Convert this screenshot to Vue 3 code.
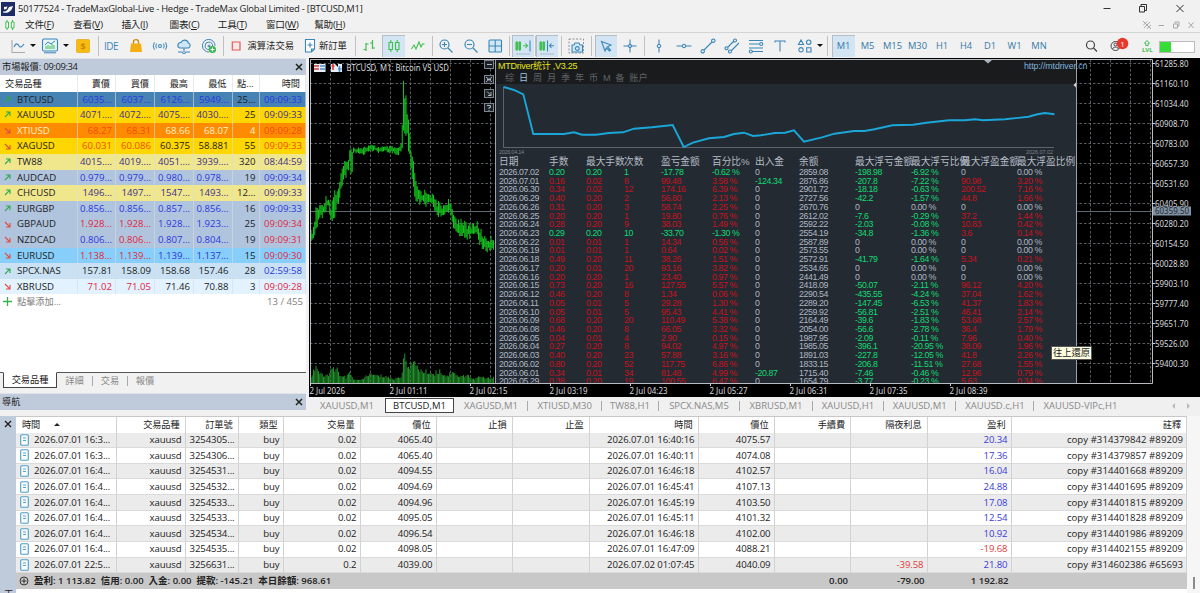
<template>
  <div class="terminal">
    <div class="titlebar">
      <svg class="logo" width="14" height="14" viewBox="0 0 14 14">
        <rect width="14" height="14" fill="#1d2a68" />
        <path d="M2 9.5C6 10 7 7 8 5L12 4C11 8 8 12 2 10.5ZM3 5L6.5 4.5L5.5 7L3 7.5Z" fill="#fff" />
      </svg>
      <span class="title-text">50177524 - TradeMaxGlobal-Live - Hedge - TradeMax Global Limited - [BTCUSD,M1]</span>
      <svg class="win-buttons" width="96" height="17" viewBox="1100 0 96 17">
        <path d="M1103.500 8.500H1110.500" />
        <path d="M1139.500 6.500H1144.500V12H1139.500ZM1141 6V4.500H1146.500V10.500H1145" />
        <path d="M1176.500 5L1183.500 12M1183.500 5L1176.500 12" />
      </svg>
    </div>

    <div class="menubar">
      <svg class="menu-logo" width="10" height="12" viewBox="0 0 10 12">
        <path d="M2 1V11M7.500 1V11" stroke="#3fbf4f" />
        <path d="M.8 3H3.500V9H.8ZM6.300 3H9V9H6.300Z" fill="#fff" stroke="#3fbf4f" />
      </svg>
      <span v-for="m in menus" :key="m.key" class="menu-item">{{ m.label }}(<u>{{ m.key }}</u>)</span>
      <svg class="child-buttons" width="56" height="16" viewBox="1140 17 56 16">
        <path d="M1143 21L1151 29M1144 28L1150 22M1143.500 25L1147 21.500M1147 28.500L1151 25" />
        <path d="M1158.500 25.500H1164" />
        <path d="M1173.500 24H1177.500V28H1173.500ZM1175 23.500V22H1179V26H1178" />
        <path d="M1188.500 22.500L1193.500 28M1193.500 22.500L1188.500 28" />
      </svg>
    </div>

    <div class="toolbar">
      <div
        v-for="(t, i) in tools"
        :key="i"
        class="tool"
        :class="[t.type, { active: t.active }]"
        :style="{ width: t.w + 'px' }"
      >
        <svg v-if="t.icon" width="20" height="20" viewBox="-10 -10 20 20">
          <path
            v-for="(p, k) in icons[t.icon]"
            :key="k"
            :d="p.d"
            :stroke="p.c || 'none'"
            :fill="p.f || 'none'"
            :stroke-width="p.w || 1.100"
            :stroke-dasharray="p.dash"
          />
          <text v-if="t.icon === 'dollar'" x="0" y="3.500" class="dollar-sign">$</text>
        </svg>
        <template v-else>{{ t.text }}</template>
      </div>
      <div class="tool-right">
        <svg width="120" height="24" viewBox="1080 34 120 24">
          <circle cx="1090.500" cy="45" r="4" fill="none" stroke="#444" stroke-width="1.200" />
          <path d="M1093.500 48L1097 51.500" stroke="#444" stroke-width="1.300" />
          <circle cx="1115.500" cy="46" r="4.500" fill="none" stroke="#444" />
          <circle cx="1115.500" cy="44.500" r="1.500" fill="none" stroke="#444" />
          <path d="M1112.500 49C1113.500 46.500 1117.500 46.500 1118.500 49" fill="none" stroke="#444" />
          <circle cx="1122.500" cy="43.500" r="5.800" fill="#e8382a" />
          <text x="1122.500" y="46.600" class="badge-text">1</text>
          <path d="M1147 40.500L1149.500 43.200H1148.200V45.500H1145.800V43.200H1144.500Z" fill="none" stroke="#3fbf4f" />
          <text x="1147.300" y="52.300" class="lvl-text">LVL</text>
          <rect x="1159.500" y="41.500" width="35" height="11" fill="#fff" stroke="#bbb" />
          <rect x="1160" y="42" width="11" height="10" fill="#37dc37" />
        </svg>
      </div>
    </div>

    <div class="workspace">
      <div class="side">
        <div class="panel-head">
          <span>市場報價: <span class="clock">09:09:34</span></span>
          <svg width="8" height="8" viewBox="0 0 8 8"><path d="M1 1L7 7M7 1L1 7" stroke="#222" stroke-width="1.500" /></svg>
        </div>
        <div class="quotes">
          <div class="quote-row quote-header">
            <span v-for="h in quoteHeaders" :key="h">{{ h }}</span>
          </div>
          <div v-for="q in quotes" :key="q.name" class="quote-row" :class="q.bg">
            <span class="symbol">
              <svg width="7" height="7" viewBox="0 0 7 7">
                <path v-if="q.up" d="M1 6L5.800 1.200M2 1H6V5" stroke="#2fa84f" fill="none" stroke-width="1.100" />
                <path v-else d="M1 1L5.800 5.800M2 6H6V2" stroke="#e04a3a" fill="none" stroke-width="1.100" />
              </svg>
              {{ q.name }}
            </span>
            <span v-for="(v, i) in q.vals" :key="i" :class="tone[q.tones[i]]">{{ v }}</span>
          </div>
          <div class="add-row">
            <svg width="9" height="9" viewBox="0 0 9 9"><path d="M4.500 0V9M0 4.500H9" stroke="#3fae4f" stroke-width="1.300" /></svg>
            <span class="add-label">點擊添加...</span>
            <span>13 / 455</span>
          </div>
        </div>
        <div class="side-tabs">
          <span class="side-tab current">交易品種</span>
          <span class="side-tab first">詳細</span>
          <span class="side-tab">交易</span>
          <span class="side-tab">報價</span>
        </div>
        <div class="panel-head nav-head">
          <span>導航</span>
          <svg width="8" height="8" viewBox="0 0 8 8"><path d="M1 1L7 7M7 1L1 7" stroke="#222" stroke-width="1.500" /></svg>
        </div>
      </div>

      <div class="chart-area">
        <div class="chart">
          <svg class="canvas" width="891" height="339" viewBox="309 58 891 339">
            <rect x="309" y="58" width="891" height="339" fill="#000" />
            <path :d="gridPath" stroke="#70767c" stroke-width=".8" stroke-dasharray="2.500 2" />
            <path d="M310 211.500H1152" stroke="#5e6873" />
            <path :d="volumePath" stroke="#22902a" stroke-width="1" />
            <path :d="candlePath" stroke="#14c01c" stroke-width="1.050" />
            <path d="M310.500 59V383.500H1152.500V59.500H310" stroke="#b8bcc0" fill="none" />
            <g class="axis">
              <template v-for="(p, i) in prices" :key="p">
                <path :d="`M1152 ${63.5 + i * 20}h3`" stroke="#ccc" />
                <text x="1155" :y="66.800 + i * 20" textLength="33.500" lengthAdjust="spacingAndGlyphs">{{ p }}</text>
              </template>
              <rect x="1153" y="206.500" width="38" height="9" fill="#8191a1" />
              <text x="1155" y="214.300" textLength="34" lengthAdjust="spacingAndGlyphs" class="last-price">60359.50</text>
              <template v-for="(t, i) in times" :key="t">
                <path :d="`M${310.5 + i * 80} 383v3`" stroke="#ccc" />
                <text :x="309.500 + i * 80" y="394" :textLength="i ? 38 : 35.500" lengthAdjust="spacingAndGlyphs">{{ t }}</text>
              </template>
              <text x="346.500" y="71" textLength="102.500" lengthAdjust="spacingAndGlyphs" class="chart-name">BTCUSD, M1:  Bitcoin VS USD</text>
            </g>
            <rect x="314" y="64" width="11.500" height="8" fill="#e9eef5" />
            <path d="M314 66H319M314 69H319" stroke="#d33c3c" stroke-width="1.500" />
            <path d="M320 66H325.500M320 69H325.500" stroke="#4a8fc4" stroke-width="1.500" />
            <rect x="331" y="64" width="11" height="8" fill="#e9eef5" />
            <path d="M333 64V70M331.500 66H334.500" stroke="#d33c3c" stroke-width="1.600" />
            <path d="M339.500 66V72M338 69H341.500" stroke="#4a8fc4" stroke-width="1.600" />
            <path d="M335 64L338 67V64" fill="#000" />
            <g v-for="(b, i) in panelButtons" :key="i" fill="none" stroke="#7b8590">
              <rect x="484.500" :y="b.y" width="9" height="8" fill="#1c2127" />
              <path :d="b.d" stroke="#aab2ba" />
            </g>
          </svg>

          <div class="stats">
            <div class="stats-top">
              <div class="stats-title">
                <span>MTDriver统计 ,V3.25</span>
                <span class="stats-url">http://mtdriver.cn</span>
              </div>
              <div class="stats-tabs">
                <span v-for="s in periods" :key="s" :class="{ on: s === '日' }">{{ s }}</span>
              </div>
            </div>
            <svg class="equity" width="580" height="72" viewBox="496 84 580 72">
              <path d="M503.500 87V147.500H1054" fill="none" stroke="#5d646b" />
              <polyline :points="equity" fill="none" stroke="#1ba6da" stroke-width="1.900" />
              <text x="499" y="154" textLength="25">2026.04.14</text>
              <text x="1026" y="154" textLength="27">2026.07.02</text>
            </svg>
            <div class="stats-table">
              <div class="stats-row stats-header">
                <span v-for="h in statsHeaders" :key="h">{{ h }}</span>
              </div>
              <div v-for="r in stats" :key="r[0]" class="stats-row">
                <span v-for="(c, i) in r" :key="i" :class="statTone(r, i)">{{ c }}</span>
              </div>
            </div>
          </div>
          <svg class="marks" width="100" height="30" viewBox="980 59 100 30">
            <path d="M984 60H992L988 63.500Z" fill="#a7b6c4" />
            <path d="M1076 82.500V87.500L1073.500 85Z" fill="#cfd6dc" />
          </svg>
          <div class="tooltip">往上還原</div>
        </div>

        <div class="chart-tabs">
          <span
            v-for="(t, i) in chartTabs"
            :key="i"
            class="chart-tab"
            :class="{ current: i === 1, divided: i > 1 && i < chartTabs.length - 1 }"
            :style="{ width: t.w + 'px' }"
          >{{ t.name }}</span>
          <span class="tab-arrows">
            <svg width="30" height="8" viewBox="0 0 30 8"><path d="M5 1L2 4L5 7ZM17 1L20 4L17 7Z" fill="#b8b8b8" /></svg>
          </span>
        </div>
      </div>
    </div>

    <div class="toolbox">
      <div class="toolbox-strip">
        <svg width="8" height="8" viewBox="0 0 8 8"><path d="M1 1L7 7M7 1L1 7" stroke="#222" stroke-width="1.400" /></svg>
        <span class="strip-label">工具箱</span>
      </div>
      <div class="history">
        <div class="deal deal-header">
          <span class="sorted">時間<i></i></span>
          <span v-for="(h, i) in dealHeaders" :key="i">{{ h }}</span>
        </div>
        <div v-for="d in deals" :key="d.note" class="deal">
          <span class="deal-time">
            <svg width="9" height="12" viewBox="0 0 9 12">
              <rect x=".7" y=".7" width="7.600" height="10.600" rx="1" fill="#f8fcff" stroke="#4f9cc8" stroke-width="1.100" />
              <path d="M3 4H6M3 6.500H6" stroke="#5aa3cc" />
            </svg>
            {{ d.open }}
          </span>
          <span>xauusd</span>
          <span>{{ d.order }}</span>
          <span>buy</span>
          <span>{{ d.volume }}</span>
          <span>{{ d.price }}</span>
          <span></span>
          <span></span>
          <span>{{ d.close }}</span>
          <span>{{ d.closePrice }}</span>
          <span></span>
          <span class="loss">{{ d.swap }}</span>
          <span :class="d.profit.startsWith('-') ? 'loss' : 'gain'">{{ d.profit }}</span>
          <span class="note">{{ d.note }}</span>
        </div>
        <div class="summary">
          <span class="summary-text">
            <svg width="10" height="10" viewBox="0 0 10 10">
              <circle cx="5" cy="5" r="4" fill="none" stroke="#333" />
              <path d="M5 2.500V7.500M2.500 5H7.500" stroke="#333" />
            </svg>
            盈利: 1 113.82&nbsp; 信用: 0.00&nbsp; 入金: 0.00&nbsp; 提款: -145.21&nbsp; 本日餘額: 968.61
          </span>
          <span>0.00</span>
          <span>-79.00</span>
          <span>1 192.82</span>
          <span></span>
        </div>
      </div>
      <div class="scroll"><i></i></div>
    </div>
  </div>
</template>

<script setup>
const menus = [
  { label: '文件', key: 'F' },
  { label: '查看', key: 'V' },
  { label: '插入', key: 'I' },
  { label: '圖表', key: 'C' },
  { label: '工具', key: 'T' },
  { label: '窗口', key: 'W' },
  { label: '幫助', key: 'H' },
]

const BLUE = '#3b86b8'
const GREEN = '#3fbf4f'

const icons = {
  line: [
    { d: 'M-6 -6V6.500H7', c: '#aaa' },
    { d: 'M-4 1C-2 -4 0 -2 1 0S4 1 6 -2', c: BLUE },
  ],
  indicators: [
    { d: 'M-6 -7H6Q7.500 -7 7.500 -5.500V3.500Q7.500 5 6 5H-6Q-7.500 5 -7.500 3.500V-5.500Q-7.500 -7 -6 -7Z', c: BLUE, f: '#e6f3fb' },
    { d: 'M-4 3V0M-2 3V-1M0 3V0M2 3V-2M4 3V-1', c: GREEN, w: 1 },
    { d: 'M-5 -1L-2 -4L1 -2L5 -5M-6 6.800H6', c: BLUE, w: 1 },
  ],
  dollar: [{ d: 'M-5.500 -6.500H5.500Q6.500 -6.500 6.500 -5.500V5.500Q6.500 6.500 5.500 6.500H-5.500Q-6.500 6.500 -6.500 5.500V-5.500Q-6.500 -6.500 -5.500 -6.500Z', f: '#f8bc10', c: '#e0a000', w: .6 }],
  bag: [
    { d: 'M-2.500 -2V-4.500C-2.500 -7 2.500 -7 2.500 -4.500V-2', c: '#c98a00', w: 1.3 },
    { d: 'M-5 -2.500H5L6 6H-6Z', f: '#f2ae12' },
  ],
  signal: [
    { d: 'M-1.500 0A1.500 1.500 0 1 0 1.500 0A1.500 1.500 0 1 0 -1.500 0', c: BLUE },
    { d: 'M-3.500 -2.500Q-5 0 -3.500 2.500M3.500 -2.500Q5 0 3.500 2.500M-5.600 -3.800Q-8 0 -5.600 3.800M5.600 -3.800Q8 0 5.600 3.800', c: BLUE, w: 1 },
  ],
  cloud: [
    { d: 'M-4 2H4.500A2.700 2.700 0 0 0 4.500 -3A4 4 0 0 0 -3 -3.500A2.800 2.800 0 0 0 -4 2Z', c: BLUE, f: '#cfe6f6' },
    { d: 'M0 2V6M-6 6H-1.500M1.500 6H6M-1.500 6A1.500 1.500 0 1 0 1.500 6', c: BLUE },
  ],
  target: [
    { d: 'M0 6A6.300 6.300 0 1 1 6 0M0 3.500A3.700 3.700 0 1 1 3.500 0M-1 0A1 1 0 1 0 1 0A1 1 0 1 0 -1 0M0 0L2 2', c: BLUE, w: 1 },
    { d: 'M-.2 3.500A3.600 3.600 0 1 0 7 3.500A3.600 3.600 0 1 0 -.2 3.500', f: '#35b54a' },
    { d: 'M3.400 1.500V5.500M1.400 3.500H5.400', c: '#fff' },
  ],
  algo: [{ d: 'M-3.700 -4H4V4H-3.700Z', c: '#e2595a', f: '#fde8e8', w: 1.2 }],
  order: [
    { d: 'M-4.500 -6.500H4.500V3L1.500 6H-4.500ZM4.500 3H1.500V6', c: BLUE, f: '#fff' },
    { d: 'M0 -3.500V1.500M-2.500 -1H2.500', c: BLUE },
  ],
  bars: [{ d: 'M-3 -3V5M-5.500 3.500H-3M-3 -2H-.5M3.500 -6V3M1 -3H3.500M3.500 2H6', c: GREEN, w: 1.2 }],
  candles: [{ d: 'M-5 -3.500H-1.500V3.500H-5ZM-3.200 -6V-3.500M-3.200 3.500V6M1.500 -3.500H5V3.500H1.500ZM3.200 -6V-3.500M3.200 3.500V6', c: GREEN }],
  zigzag: [{ d: 'M-6.500 3L-4 -1L-2 3L1 -4L3 1L4.500 -2L6.500 -2', c: GREEN }],
  zoomIn: [
    { d: 'M-6 -1.500A4.500 4.500 0 1 0 3 -1.500A4.500 4.500 0 1 0 -6 -1.500M2 2L6.500 6.500', c: BLUE, w: 1.2 },
    { d: 'M-4 -1.500H1M-1.500 -4V1', c: BLUE },
  ],
  zoomOut: [
    { d: 'M-6 -1.500A4.500 4.500 0 1 0 3 -1.500A4.500 4.500 0 1 0 -6 -1.500M2 2L6.500 6.500', c: BLUE, w: 1.2 },
    { d: 'M-4 -1.500H1', c: BLUE },
  ],
  grid: [{ d: 'M-5 -6H5.500Q6.500 -6 6.500 -5V5Q6.500 6 5.500 6H-5Q-6 6 -6 5V-5Q-6 -6 -5 -6ZM.2 -6V6M-6 0H6.500', c: BLUE, f: '#d2e8f6' }],
  autoscroll: [
    { d: 'M-7 -3.500H-5.500V3.500H-7ZM-4 -3.500H-2.500V3.500H-4ZM-6.200 -5V5M-3.200 -5V5', c: GREEN },
    { d: 'M0 -.2H4.500M2.500 -2.500L4.500 -.2L2.500 2', c: GREEN },
    { d: 'M7 -5.500V5.500', c: BLUE },
    { d: 'M-7 8H7', c: '#9fb4c6', w: .8 },
  ],
  shift: [
    { d: 'M-7 -3.500H-5.500V3.500H-7ZM-4 -3.500H-2.500V3.500H-4ZM-6.200 -5V5M-3.200 -5V5', c: GREEN },
    { d: 'M.5 -5.500V5.500M7 -.2H2.500M4.500 -2.500L2.500 -.2L4.500 2', c: BLUE },
    { d: 'M-7 8H7', c: '#9fb4c6', w: .8 },
  ],
  camera: [
    { d: 'M-7 -7H7.500V7H-7Z', c: '#888', dash: '2 1.500', w: .9 },
    { d: 'M-4 -1H-2L-1 -3H3L4 -1H6.500V6H-4Z', c: BLUE, f: '#d2e8f6' },
    { d: 'M-.6 2.500A1.900 1.900 0 1 0 3.200 2.500A1.900 1.900 0 1 0 -.6 2.500', c: BLUE },
  ],
  cursor: [{ d: 'M-4.500 -4.500L5 -1L1.500 .8L4.500 4L3.500 5L.3 2L-1 5Z', c: BLUE }],
  cross: [{ d: 'M0 -6.500V-1.500M0 1.500V6.500M-6.500 0H-1.500M1.500 0H6.500M0 -2L2 0L0 2L-2 0Z', c: BLUE }],
  vline: [{ d: 'M0 -6.500V-2M0 2V6.500M-1.700 0A1.700 1.700 0 1 0 1.700 0A1.700 1.700 0 1 0 -1.700 0', c: BLUE }],
  hline: [{ d: 'M-7.500 0H-2M2 0H7.500M-1.700 0A1.700 1.700 0 1 0 1.700 0A1.700 1.700 0 1 0 -1.700 0', c: BLUE }],
  trend: [{ d: 'M-4 4L4 -4M-7 5.300A1.700 1.700 0 1 0 -3.600 5.300A1.700 1.700 0 1 0 -7 5.300M3.600 -5.300A1.700 1.700 0 1 0 7 -5.300A1.700 1.700 0 1 0 3.600 -5.300', c: BLUE }],
  channel: [{ d: 'M-4 1L2 -5M-1 5L7 -3M-7 2.300A1.500 1.500 0 1 0 -4 2.300A1.500 1.500 0 1 0 -7 2.300M1.500 -5.500A1.500 1.500 0 1 0 4.500 -5.500A1.500 1.500 0 1 0 1.500 -5.500M-3.500 5.500A1.500 1.500 0 1 0 -.5 5.500A1.500 1.500 0 1 0 -3.500 5.500', c: BLUE }],
  fibo: [{ d: 'M-7 -5.500H7M-7 -2H3.500M-7 2H7M-3.500 5.500H7M3.700 -2A1.500 1.500 0 1 0 6.700 -2A1.500 1.500 0 1 0 3.700 -2M-6.700 5.500A1.500 1.500 0 1 0 -3.700 5.500A1.500 1.500 0 1 0 -6.700 5.500', c: BLUE }],
  text: [{ d: 'M-5 -3.500V-5H5V-3.500M0 -5V5.500', c: BLUE }],
  shapes: [{ d: 'M-4 -6L-1.500 -1.500H-6.500ZM1.500 -3.800A2.200 2.200 0 1 0 5.900 -3.800A2.200 2.200 0 1 0 1.500 -3.800M-6.200 3.800A2.200 2.200 0 1 0 -1.800 3.800A2.200 2.200 0 1 0 -6.200 3.800M1.700 1.700H6V6H1.700Z', c: BLUE }],
}

const caret = w => ({ type: 'caret', w })
const sep = w => ({ type: 'sep', w })
const icon = (name, w, active) => ({ type: 'icon', icon: name, w, active })
const frame = (text, w, active) => ({ type: 'frame', text, w, active })

const tools = [
  icon('line', 22), caret(8), icon('indicators', 26), caret(5), icon('dollar', 29.5), sep(1.5),
  { type: 'ide', text: 'IDE', w: 24 }, icon('bag', 25), icon('signal', 24), icon('cloud', 24.5), icon('target', 25), sep(3),
  icon('algo', 23), { type: 'label', text: '演算法交易', w: 54 }, icon('order', 17.5), { type: 'label', text: '新訂單', w: 36 }, sep(1),
  icon('bars', 26), icon('candles', 23, true), icon('zigzag', 26), sep(2),
  icon('zoomIn', 26), icon('zoomOut', 24), icon('grid', 24), sep(5),
  icon('autoscroll', 22, true), sep(2), icon('shift', 22, true), sep(6), icon('camera', 24), sep(7),
  icon('cursor', 22, true), icon('cross', 26), sep(3),
  icon('vline', 26), icon('hline', 23), icon('trend', 25), icon('channel', 24), icon('fibo', 24), icon('text', 24), icon('shapes', 25), caret(5), sep(10),
  frame('M1', 23, true), frame('M5', 25), frame('M15', 25), frame('M30', 25), frame('H1', 24), frame('H4', 24), frame('D1', 24), frame('W1', 25), frame('MN', 24),
]

const tone = { b: 'blue', r: 'red', k: 'dark', w: 'white', n: 'navy' }
const quoteHeaders = ['交易品種', '賣價', '買價', '最高', '最低', '點...', '時間']
const quotes = [
  { name: 'BTCUSD', up: true, bg: 'steel', tones: 'bbbbkb', vals: ['6035...', '6037...', '6126...', '5949...', '25...', '09:09:33'] },
  { name: 'XAUUSD', up: true, bg: 'gold', tones: 'nnnnkn', vals: ['4071....', '4072....', '4075....', '4030....', '25', '09:09:33'] },
  { name: 'XTIUSD', up: false, bg: 'orange', tones: 'rrwwwr', vals: ['68.27', '68.31', '68.66', '68.07', '4', '09:09:28'] },
  { name: 'XAGUSD', up: false, bg: 'gold', tones: 'rrkkkr', vals: ['60.031', '60.086', '60.375', '58.881', '55', '09:09:33'] },
  { name: 'TW88', up: true, bg: 'khaki', tones: 'nnnnkn', vals: ['4015....', '4019....', '4051....', '3939....', '320', '08:44:59'] },
  { name: 'AUDCAD', up: true, bg: 'pale', tones: 'bbbbkb', vals: ['0.979...', '0.979...', '0.980...', '0.978...', '19', '09:09:34'] },
  { name: 'CHCUSD', up: true, bg: 'khaki', tones: 'nnnnkn', vals: ['1496...', '1497...', '1547...', '1493...', '12...', '09:09:33'] },
  { name: 'EURGBP', up: true, bg: 'pale', tones: 'bbbbkb', vals: ['0.856...', '0.856...', '0.857...', '0.856...', '16', '09:09:33'] },
  { name: 'GBPAUD', up: false, bg: 'pale', tones: 'rrbbkr', vals: ['1.928...', '1.928...', '1.928...', '1.923...', '25', '09:09:34'] },
  { name: 'NZDCAD', up: false, bg: 'pale', tones: 'brbbkr', vals: ['0.806...', '0.806...', '0.807...', '0.804...', '19', '09:09:31'] },
  { name: 'EURUSD', up: false, bg: 'sky', tones: 'rrbbkr', vals: ['1.138...', '1.139...', '1.139...', '1.137...', '15', '09:09:30'] },
  { name: 'SPCX.NAS', up: true, bg: 'mist', tones: 'kkkkkb', vals: ['157.81', '158.09', '158.68', '157.46', '28', '02:59:58'] },
  { name: 'XBRUSD', up: false, bg: 'ice', tones: 'rrkkkr', vals: ['71.02', '71.05', '71.46', '70.88', '3', '09:09:28'] },
]

// chart axes
const prices = Array.from({ length: 16 }, (_, i) => (61285.8 - i * 125.7).toFixed(2))
const times = ['2 Jul 2026', '2 Jul 01:11', '2 Jul 02:15', '2 Jul 03:19', '2 Jul 04:23', '2 Jul 05:27', '2 Jul 06:31', '2 Jul 07:35', '2 Jul 08:39']

let gridPath = ''
for (let x = 330.5; x < 1152; x += 20) gridPath += `M${x} 60V383`
for (let y = 63.5; y < 383; y += 20) gridPath += `M310 ${y}H1152`

// [x, high, low]
const swings = [
  [311, 230, 245], [314, 226, 240], [316, 203, 232], [320, 204, 224], [325, 196, 218], [328, 192, 210], [331, 203, 223],
  [334, 186, 221], [337, 186, 213], [340, 177, 202], [343, 162, 184], [348, 159, 174], [349.3, 140, 172], [352, 148, 176], [353.5, 147, 155],
  [358, 146, 154], [364, 146, 155], [370, 144, 152], [378, 146, 153], [386, 146, 153], [392, 146, 154], [398, 147, 156], [402, 142, 152],
  [403, 72, 149], [405.5, 88, 145], [407.5, 104, 146], [410, 136, 164], [413, 156, 190], [416, 180, 204],
  [419, 187, 207], [424, 189, 208], [429, 187, 210], [433, 194, 208], [438, 200, 221], [443, 204, 217], [449, 197, 214], [450.5, 202, 218], [452.5, 210, 228],
  [457, 216, 237], [463, 217, 236], [467, 224, 241], [473, 221, 239], [476, 219, 241], [480, 226, 247], [485, 235, 253], [490, 236, 253], [494, 234, 252],
]
const volumes = [
  [311, 7], [316, 20], [320, 10], [325, 7], [328, 10], [333, 15], [337, 15], [340, 7], [343, 10], [346, 5], [349, 12], [353, 5], [358, 3],
  [363, 4], [367, 9], [370, 10], [377, 8], [382, 8], [388, 7], [393, 4], [400, 7], [402, 8], [403, 30], [407, 23], [412, 20], [417, 21],
  [420, 15], [423, 12], [428, 13], [433, 10], [440, 14], [443, 10], [448, 8], [453, 15], [457, 8], [462, 7], [467, 10], [473, 4], [480, 7], [487, 5], [494, 7],
]

const lerp = (pts, x, k) => {
  let i = 1
  while (i < pts.length - 1 && pts[i][0] < x) i++
  const [a, b] = [pts[i - 1], pts[i]]
  const t = Math.min(1, Math.max(0, (x - a[0]) / (b[0] - a[0])))
  return a[k] + (b[k] - a[k]) * t
}
const noise = n => {
  const v = Math.sin(n * 12.9898) * 43758.5453
  return v - Math.floor(v)
}

let candlePath = ''
let volumePath = ''
for (let i = 0; i < 147; i++) {
  const x = 311 + i * 1.25
  const hi = lerp(swings, x, 1)
  const lo = lerp(swings, x, 2)
  const r = lo - hi
  candlePath += `M${x} ${(hi + r * 0.4 * noise(i)).toFixed(1)}V${(lo - r * 0.4 * noise(i + 500)).toFixed(1)}`
  volumePath += `M${x} 383V${(383 - lerp(volumes, x, 1) * (0.65 + 0.45 * noise(i + 900))).toFixed(1)}`
}

const panelButtons = [
  { y: 60.5, d: 'M487 64.500H492' },
  { y: 75.5, d: 'M486 77L492 82M492 77L486 82M487 79.500H491' },
  { y: 89.5, d: 'M487 91.500L491 95.500M491 92V95.500H488' },
  { y: 103.5, d: 'M487 105.500H490.500V107.500H489V109M489 110V111' },
]

const equity = '503.500,87 514,90 523.300,94.300 533.300,134 564,134 574,132.300 582,134.700 596,134.700 609,133 623,132.300 634,128.700 652,127.300 672.700,125 683.700,147 693,142.700 709,138.300 724,137 734,134 744,132.700 753,136 761,135.300 775,133 785,132.700 794,130.300 804,141.700 822,137.300 834.500,133.700 854,131 864.500,131 874.500,129.300 892.500,125.300 913,124.700 926.500,122.700 949,120.300 965,120.300 975,119.300 983,120.300 1005,119.300 1028.500,116.700 1037.500,114.300 1045,113 1054.500,114.300'

const periods = ['综', '日', '周', '月', '季', '年', '币', 'M', '备', '账户']
const statsHeaders = ['日期', '手数', '最大手数', '次数', '盈亏金额', '百分比%', '出入金', '余额', '最大浮亏金额', '最大浮亏比例', '最大浮盈金额', '最大浮盈比例']
const stats = `07.02|0.20|0.20|1|-17.78|-0.62|0|2859.08|-198.98|-6.92|0|0.00
07.01|0.16|0.02|8|99.48|3.58|-124.34|2876.86|-207.8|-7.22|90.98|3.20
06.30|0.34|0.02|12|174.16|6.39|0|2901.72|-18.18|-0.63|200.52|7.16
06.29|0.40|0.20|2|56.80|2.13|0|2727.56|-42.2|-1.57|44.8|1.66
06.26|0.31|0.20|3|58.74|2.25|0|2670.76|0|0.00|0|0.00
06.25|0.20|0.20|1|19.80|0.76|0|2612.02|-7.6|-0.29|37.2|1.44
06.24|0.28|0.20|9|38.03|1.49|0|2592.22|-2.03|-0.08|10.83|0.42
06.23|0.29|0.20|10|-33.70|-1.30|0|2554.19|-34.8|-1.36|3.6|0.14
06.22|0.01|0.01|1|14.34|0.56|0|2587.89|0|0.00|0|0.00
06.19|0.01|0.01|1|0.64|0.02|0|2573.55|0|0.00|0|0.00
06.18|0.49|0.20|11|38.26|1.51|0|2572.91|-41.79|-1.64|5.34|0.21
06.17|0.20|0.01|20|93.16|3.82|0|2534.65|0|0.00|0|0.00
06.16|0.20|0.20|1|23.40|0.97|0|2441.49|0|0.00|0|0.00
06.15|0.73|0.20|16|127.55|5.57|0|2418.09|-50.07|-2.11|96.12|4.20
06.12|0.46|0.20|8|1.34|0.06|0|2290.54|-435.55|-4.24|37.04|1.62
06.11|0.05|0.01|5|29.28|1.30|0|2289.20|-147.45|-6.53|41.37|1.83
06.10|0.05|0.01|5|95.43|4.41|0|2259.92|-56.81|-2.51|46.41|2.14
06.09|0.68|0.20|20|110.49|5.38|0|2164.49|-39.6|-1.83|53.68|2.57
06.08|0.46|0.20|8|66.05|3.32|0|2054.00|-56.6|-2.78|36.4|1.79
06.05|0.04|0.01|4|2.90|0.15|0|1987.95|-2.09|-0.11|7.96|0.40
06.04|0.27|0.20|8|94.02|4.97|0|1985.05|-396.1|-20.95|38.09|1.96
06.03|0.40|0.20|23|57.88|3.16|0|1891.03|-227.8|-12.05|41.8|2.26
06.02|0.80|0.20|52|117.75|6.86|0|1833.15|-206.8|-11.51|27.68|1.55
06.01|0.34|0.01|34|81.48|4.99|-20.87|1715.40|-7.46|-0.46|12.96|0.79
05.29|0.38|0.20|19|100.55|6.47|0|1654.79|-3.77|-0.23|5.63|0.34`.split('\n').map(line => {
  const c = line.split('|')
  c[0] = '2026.' + c[0]
  for (const i of [5, 9, 11]) c[i] += ' %'
  return c
})

const statTone = (row, i) => {
  if (i === 0 || i === 7) return 'plain'
  if (i === 6) return row[6] === '0' ? 'plain' : 'down'
  if (i < 6) return row[4].startsWith('-') ? 'down' : 'up'
  if (parseFloat(row[i]) === 0) return 'plain'
  return row[i].startsWith('-') ? 'down' : 'up'
}

const chartTabs = [
  { name: 'XAUUSD,M1', w: 76 },
  { name: 'BTCUSD,M1', w: 69 },
  { name: 'XAGUSD,M1', w: 74 },
  { name: 'XTIUSD,M30', w: 73.5 },
  { name: 'TW88,H1', w: 57 },
  { name: 'SPCX.NAS,M5', w: 81 },
  { name: 'XBRUSD,M1', w: 73 },
  { name: 'XAUUSD,H1', w: 71 },
  { name: 'XAUUSD,M1', w: 72.5 },
  { name: 'XAUUSD.c,H1', w: 78 },
  { name: 'XAUUSD-VIPc,H1', w: 93 },
]

const dealHeaders = ['交易品種', '訂單號', '類型', '交易量', '價位', '止損', '止盈', '時間', '價位', '手續費', '隔夜利息', '盈利', '註釋']
const deals = [
  { open: '2026.07.01 16:3...', order: '3254305...', volume: '0.02', price: '4065.40', close: '2026.07.01 16:40:16', closePrice: '4075.57', profit: '20.34', note: 'copy #314379842 #89209' },
  { open: '2026.07.01 16:3...', order: '3254306...', volume: '0.02', price: '4065.40', close: '2026.07.01 16:40:11', closePrice: '4074.08', profit: '17.36', note: 'copy #314379857 #89209' },
  { open: '2026.07.01 16:4...', order: '3254531...', volume: '0.02', price: '4094.55', close: '2026.07.01 16:46:18', closePrice: '4102.57', profit: '16.04', note: 'copy #314401668 #89209' },
  { open: '2026.07.01 16:4...', order: '3254532...', volume: '0.02', price: '4094.69', close: '2026.07.01 16:45:41', closePrice: '4107.13', profit: '24.88', note: 'copy #314401695 #89209' },
  { open: '2026.07.01 16:4...', order: '3254533...', volume: '0.02', price: '4094.96', close: '2026.07.01 16:45:19', closePrice: '4103.50', profit: '17.08', note: 'copy #314401815 #89209' },
  { open: '2026.07.01 16:4...', order: '3254533...', volume: '0.02', price: '4095.05', close: '2026.07.01 16:45:11', closePrice: '4101.32', profit: '12.54', note: 'copy #314401828 #89209' },
  { open: '2026.07.01 16:4...', order: '3254534...', volume: '0.02', price: '4096.54', close: '2026.07.01 16:46:18', closePrice: '4102.00', profit: '10.92', note: 'copy #314401986 #89209' },
  { open: '2026.07.01 16:4...', order: '3254535...', volume: '0.02', price: '4098.05', close: '2026.07.01 16:47:09', closePrice: '4088.21', profit: '-19.68', note: 'copy #314402155 #89209' },
  { open: '2026.07.01 22:5...', order: '3256631...', volume: '0.2', price: '4039.00', close: '2026.07.02 01:07:45', closePrice: '4040.09', swap: '-39.58', profit: '21.80', note: 'copy #314602386 #65693' },
]
</script>

<style>
html, body {
  margin: 0;
  background: #f1f1f1;
  overflow: hidden;
}
</style>

<style scoped>
.terminal {
  width: 1200px;
  height: 593px;
  display: flex;
  flex-direction: column;
  overflow: hidden;
  background: #f1f1f1;
  color: #222;
  font: 9.6px/1 "Open Sans", "Noto Sans CJK TC", sans-serif;
  white-space: nowrap;
}
svg {
  display: block;
  flex: none;
}

.titlebar {
  height: 17px;
  display: flex;
  align-items: center;
  padding: 0 4px 0 1px;
}
.title-text {
  margin-left: 3px;
  font-size: 9.4px;
  letter-spacing: -0.23px;
}
.win-buttons {
  margin-left: auto;
  fill: none;
  stroke: #333;
}
.menubar {
  height: 16px;
  display: flex;
  align-items: center;
  padding: 0 4px 0 5px;
  border-bottom: 1px solid #d4d4d4;
  box-sizing: border-box;
}
.menu-item {
  width: 48.200px;
  letter-spacing: -0.2px;
}
.menu-logo {
  margin-right: 10px;
}
.child-buttons {
  margin-left: auto;
  fill: none;
  stroke: #a8a8a8;
}

.toolbar {
  height: 25px;
  display: flex;
  align-items: center;
  padding-left: 7px;
  box-sizing: border-box;
}
.tool {
  height: 22px;
  flex: none;
  display: flex;
  align-items: center;
  justify-content: center;
}
.tool.active {
  background: #d3e5f3;
  box-shadow: inset 1px 1px #b5bdc6;
}
.tool.caret::before {
  content: "";
  border: 3px solid transparent;
  border-top: 3.500px solid #111;
  border-bottom: 0;
}
.tool.sep::before {
  content: "";
  width: 1px;
  height: 20px;
  background: #c0c0c0;
}
.tool.ide {
  color: #3b86b8;
  font-size: 10px;
  letter-spacing: -0.5px;
}
.tool.label {
  justify-content: flex-start;
  font-size: 9.3px;
}
.tool.frame {
  color: #3179a8;
  font-size: 9.3px;
}
.dollar-sign {
  font-size: 9px;
  font-weight: bold;
  fill: #c98600;
  text-anchor: middle;
}
.tool-right {
  margin-left: auto;
}
.badge-text {
  font-size: 8px;
  fill: #fff;
  text-anchor: middle;
}
.lvl-text {
  font-size: 6px;
  font-weight: bold;
  fill: #3fbf4f;
  text-anchor: middle;
}

.workspace {
  height: 358px;
  display: flex;
  gap: 3px;
}
.side {
  width: 306px;
  display: flex;
  flex-direction: column;
}
.panel-head {
  height: 17px;
  box-sizing: border-box;
  display: flex;
  align-items: center;
  justify-content: space-between;
  padding: 0 3px 0 2px;
  border-top: 1px solid #dfe3e8;
  background: #bfcbda;
  font-size: 9.2px;
}
.clock {
  font-size: 9.4px;
  letter-spacing: -0.4px;
}
.quotes {
  height: 297px;
  background: #fff;
}
.quote-row {
  height: 15.620px;
  display: grid;
  grid-template-columns: 77.500px 38.500px 39px 39px 38.500px 27px 46.500px;
}
.quote-row > span {
  display: flex;
  align-items: center;
  justify-content: flex-end;
  box-sizing: border-box;
  padding-right: 3px;
  border-right: 1px solid rgba(215, 220, 225, 0.6);
}
.quote-header {
  height: 16.500px;
  font-size: 9.2px;
}
.quote-header > span {
  padding-right: 5px;
}
.quote-header > span:first-child {
  justify-content: flex-start;
  padding-left: 5px;
}
.quote-row > .symbol {
  justify-content: flex-start;
  padding-left: 4px;
  gap: 6px;
}
.steel { background: #4682b4; }
.gold { background: #ffd700; }
.orange { background: #ff8c00; color: #fff0d0; }
.khaki { background: #f0e68c; }
.pale { background: #b0c4de; }
.sky { background: #87cefa; }
.mist { background: #c9e1f3; }
.ice { background: #e2f2ff; }
.blue { color: #2a37e0; }
.navy { color: #40308a; }
.red { color: #e2263c; }
.gold .red, .orange .red { color: #f24a08; }
.dark { color: #222; }
.white { color: #fff0d0; }
.add-row {
  height: 15px;
  display: flex;
  align-items: center;
  padding: 0 3px;
  color: #808080;
}
.add-label {
  flex: 1;
  padding-left: 5px;
  font-size: 9.2px;
}
.side-tabs {
  height: 20px;
  display: flex;
  align-items: center;
  border-top: 1px solid #555;
  box-sizing: border-box;
  padding-left: 3px;
  color: #888;
  font-size: 9.2px;
}
.side-tab {
  width: 35px;
  height: 10px;
  display: flex;
  align-items: center;
  justify-content: center;
  border-left: 1px solid #aaa;
  box-sizing: border-box;
  margin-bottom: 4px;
}
.side-tab.first {
  border-left: 0;
}
.side-tab.current {
  width: 54px;
  height: 16px;
  margin: -2px 0 3px;
  background: #fff;
  color: #222;
  border: 1px solid #444;
  border-top-color: #fff;
}
.nav-head {
  margin-top: 1px;
}

.chart-area {
  width: 891px;
}
.chart {
  position: relative;
  height: 339px;
}
.axis {
  font-family: "Noto Sans", sans-serif;
  font-size: 8.5px;
  fill: #d8dade;
}
.axis .last-price {
  fill: #1d2a38;
}
.chart-name {
  white-space: pre;
}
.stats {
  position: absolute;
  left: 186px;
  top: 2px;
  width: 582px;
  height: 323px;
  box-sizing: border-box;
  border-left: 1px solid #9aa1a8;
  border-right: 1px solid #9aa1a8;
  background: #242a31;
  font-family: "Liberation Sans", "Noto Sans CJK SC", sans-serif;
}
.stats-top {
  height: 24px;
  background: #1a1b1c;
}
.stats-title {
  display: flex;
  justify-content: space-between;
  height: 13px;
  align-items: center;
  padding: 0 0 0 2px;
  font-size: 9px;
  letter-spacing: -0.25px;
  color: #e6e61c;
}
.stats-url {
  color: #7fb4dc;
  width: 52px;
  font-size: 8.8px;
  letter-spacing: -0.1px;
}
.stats-tabs {
  display: flex;
  height: 11px;
  align-items: center;
  padding-left: 9px;
  gap: 4.800px;
  color: #5f6468;
  font-size: 9.2px;
}
.stats-tabs .on {
  color: #9fc0e0;
}
.equity text {
  font-size: 5.5px;
  fill: #7c838a;
}
.stats-table {
  height: 227px;
  overflow: hidden;
}
.stats-row {
  height: 8.720px;
  display: grid;
  grid-template-columns: 50px 37px 38px 37px 51px 43px 44px 56px 56px 50px 56px 62px;
  align-items: center;
  padding-left: 3px;
  font-size: 8.8px;
  letter-spacing: -0.4px;
}
.stats-header {
  height: 12px;
  font-size: 9.7px;
  letter-spacing: 0;
  color: #b4bcc6;
}
.plain { color: #adb7c4; }
.up { color: #c41220; }
.down { color: #12da74; }

.marks {
  position: absolute;
  left: 671px;
  top: 1px;
}
.tooltip {
  position: absolute;
  left: 742px;
  top: 288px;
  width: 41px;
  height: 14px;
  box-sizing: border-box;
  border: 1px solid #555;
  background: #ffffe1;
  color: #222;
  font-size: 9.3px;
  line-height: 12px;
  text-align: center;
}

.chart-tabs {
  height: 19px;
  display: flex;
  color: #8a8a8a;
  background: #f0f0f0;
}
.chart-tab {
  flex: none;
  height: 18px;
  display: flex;
  align-items: center;
  justify-content: center;
  box-sizing: border-box;
  background: linear-gradient(#aaa, #aaa) right 4px / 0 10px no-repeat;
  font-size: 9.5px;
}
.chart-tab.divided {
  background-size: 1px 10px;
}
.chart-tab.current {
  height: 15px;
  margin-top: 1px;
  border: 1px solid #444;
  background: #fff;
  color: #222;
}
.tab-arrows {
  margin-left: auto;
  padding: 5px 0 0;
}

.toolbox {
  flex: 1;
  display: flex;
  background: #fff;
}
.toolbox-strip {
  width: 16px;
  background: #bfcbda;
  display: flex;
  flex-direction: column;
  align-items: center;
  justify-content: space-between;
  padding-top: 4px;
  box-sizing: border-box;
}
.strip-label {
  height: 4px;
  overflow: hidden;
  writing-mode: vertical-rl;
  font-size: 9.3px;
}
.history {
  width: 1171px;
  border-top: 1px solid #c8c8c8;
}
.deal, .summary {
  height: 15.640px;
  display: grid;
  grid-template-columns: 100.500px 69px 53px 45px 77px 76px 76px 77px 109px 76px 76.500px 76.500px 84px 175.500px;
}
.deal > span {
  display: flex;
  align-items: center;
  justify-content: flex-end;
  padding-right: 3px;
  border-right: 1px solid #d2d2d2;
  border-bottom: 1px solid #dadada;
  box-sizing: border-box;
  letter-spacing: -0.1px;
}
.deal > .note {
  letter-spacing: 0.04px;
}
.deal:nth-child(even) {
  background: #ebebeb;
}
.deal-header {
  height: 15.500px;
}
.deal-header > span {
  padding-right: 5px;
  border-bottom: 0;
  font-size: 9.2px;
}
.deal-header > .sorted {
  justify-content: flex-start;
  padding-left: 6px;
}
.sorted i {
  margin-left: 14px;
  border: 3px solid transparent;
  border-top: 0;
  border-bottom: 3px solid #222;
}
.deal > .deal-time {
  justify-content: flex-start;
  padding-left: 4px;
  gap: 5px;
}
.gain { color: #3a3ad8; }
.loss { color: #e03a3a; }
.summary {
  background: #c8c8c8;
  font-weight: 600;
  align-items: center;
  text-align: right;
  font-size: 9.5px;
}
.summary > span {
  padding-right: 3px;
}
.summary > .summary-text {
  grid-column: span 10;
  display: flex;
  align-items: center;
  gap: 5px;
  padding-left: 3px;
}
.scroll {
  flex: 1;
  display: flex;
  align-items: flex-end;
  justify-content: center;
  background: #f6f6f6;
}
.scroll i {
  width: 2px;
  height: 12px;
  margin-bottom: 4px;
  background: #8a8a8a;
}
</style>
